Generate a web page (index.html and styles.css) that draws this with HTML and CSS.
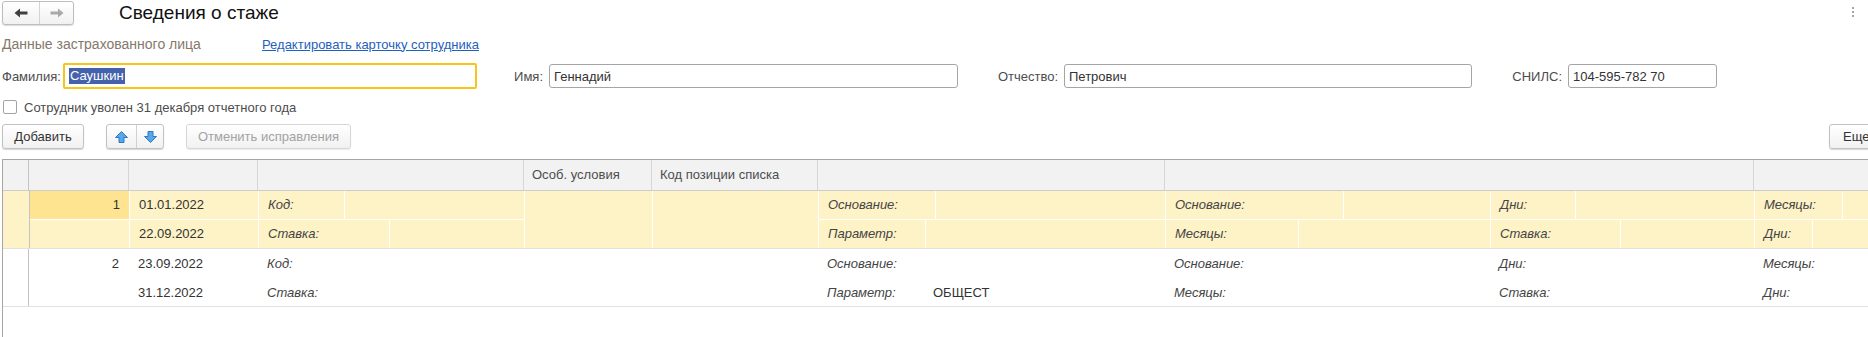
FILE: index.html
```html
<!DOCTYPE html>
<html lang="ru">
<head>
<meta charset="utf-8">
<title>Сведения о стаже</title>
<link rel="stylesheet" href="styles.css">
</head>
<body>
<div class="topbar">
  <div class="navgroup">
    <div class="navbtn nav-back">
      <svg width="14" height="10" viewBox="0 0 14 10"><path d="M0.5 5 L6 0.5 L6 3.5 L13.5 3.5 L13.5 6.5 L6 6.5 L6 9.5 Z" fill="#404040"/></svg>
    </div>
    <div class="navbtn nav-fwd">
      <svg width="14" height="10" viewBox="0 0 14 10"><path d="M13.5 5 L8 0.5 L8 3.5 L0.5 3.5 L0.5 6.5 L8 6.5 L8 9.5 Z" fill="#a9a9a9"/></svg>
    </div>
  </div>
  <h1 class="title">Сведения о стаже</h1>
  <div class="kebab"><span></span><span></span><span></span></div>
</div>

<div class="form">
  <div class="grouprow">
    <span class="grouptitle">Данные застрахованного лица</span>
    <a class="link" href="#">Редактировать карточку сотрудника</a>
  </div>

  <div class="fieldsrow">
    <span class="flabel first">Фамилия:</span>
    <div class="input focused"><span class="sel">Саушкин</span></div>
    <span class="flabel">Имя:</span>
    <div class="input">Геннадий</div>
    <span class="flabel">Отчество:</span>
    <div class="input">Петрович</div>
    <span class="flabel">СНИЛС:</span>
    <div class="input">104-595-782 70</div>
  </div>

  <div class="checkrow">
    <span class="checkbox"></span>
    <span class="checklabel">Сотрудник уволен 31 декабря отчетного года</span>
  </div>

  <div class="toolbar">
    <button class="btn btn-add">Добавить</button>
    <div class="btngroup">
      <button class="gbtn">
        <svg width="13" height="12" viewBox="0 0 13 12"><path d="M6.5 0.5 L12.5 6.5 L9 6.5 L9 11.5 L4 11.5 L4 6.5 L0.5 6.5 Z" fill="#5aa7e8" stroke="#2f78c4" stroke-width="1" stroke-linejoin="round"/></svg>
      </button>
      <button class="gbtn">
        <svg width="13" height="12" viewBox="0 0 13 12"><path d="M6.5 11.5 L12.5 5.5 L9 5.5 L9 0.5 L4 0.5 L4 5.5 L0.5 5.5 Z" fill="#5aa7e8" stroke="#2f78c4" stroke-width="1" stroke-linejoin="round"/></svg>
      </button>
    </div>
    <button class="btn btn-undo" disabled>Отменить исправления</button>
    <button class="btn btn-more">Еще <span class="caret">▾</span></button>
  </div>

  <div class="table">
    <div class="thead">
      <div class="th"></div>
      <div class="th"></div>
      <div class="th"></div>
      <div class="th"></div>
      <div class="th">Особ. условия</div>
      <div class="th">Код позиции списка</div>
      <div class="th"></div>
      <div class="th span2"></div>
      <div class="th"></div>
    </div>

    <div class="rec sel">
      <div class="c0"></div>
      <div class="cell num cur r1">1</div>
      <div class="cell r1">01.01.2022</div>
      <div class="cell split r1"><span class="lab w85">Код:</span><span class="val"></span></div>
      <div class="cell tall"></div>
      <div class="cell tall"></div>
      <div class="cell split r1"><span class="lab w116">Основание:</span><span class="val"></span></div>
      <div class="cell split r1"><span class="lab w177">Основание:</span><span class="val"></span></div>
      <div class="cell split r1"><span class="lab w84">Дни:</span><span class="val"></span></div>
      <div class="cell split r1"><span class="lab w87">Месяцы:</span><span class="val"></span></div>

      <div class="cell num"></div>
      <div class="cell">22.09.2022</div>
      <div class="cell split"><span class="lab w130">Ставка:</span><span class="val"></span></div>
      <div class="cell split"><span class="lab w106">Параметр:</span><span class="val"></span></div>
      <div class="cell split"><span class="lab w132">Месяцы:</span><span class="val"></span></div>
      <div class="cell split"><span class="lab w129">Ставка:</span><span class="val"></span></div>
      <div class="cell split"><span class="lab w57">Дни:</span><span class="val"></span></div>
    </div>

    <div class="rec">
      <div class="c0"></div>
      <div class="cell num r1">2</div>
      <div class="cell r1">23.09.2022</div>
      <div class="cell split r1"><span class="lab w85">Код:</span><span class="val"></span></div>
      <div class="cell tall"></div>
      <div class="cell tall"></div>
      <div class="cell split r1"><span class="lab w116">Основание:</span><span class="val"></span></div>
      <div class="cell split r1"><span class="lab w177">Основание:</span><span class="val"></span></div>
      <div class="cell split r1"><span class="lab w84">Дни:</span><span class="val"></span></div>
      <div class="cell split r1"><span class="lab w87">Месяцы:</span><span class="val"></span></div>

      <div class="cell num"></div>
      <div class="cell">31.12.2022</div>
      <div class="cell split"><span class="lab w130">Ставка:</span><span class="val"></span></div>
      <div class="cell split"><span class="lab w106">Параметр:</span><span class="val">ОБЩЕСТ</span></div>
      <div class="cell split"><span class="lab w132">Месяцы:</span><span class="val"></span></div>
      <div class="cell split"><span class="lab w129">Ставка:</span><span class="val"></span></div>
      <div class="cell split"><span class="lab w57">Дни:</span><span class="val"></span></div>
    </div>
  </div>
</div>
</body>
</html>
```

FILE: styles.css
```css
* { box-sizing: border-box; }
html, body {
  margin: 0;
  padding: 0;
  overflow: hidden;
  background: #fff;
}
body {
  width: 1868px;
  height: 337px;
  font-family: "Liberation Sans", Arial, sans-serif;
  font-size: 13px;
  color: #333;
}

/* ---------- top bar ---------- */
.topbar {
  display: flex;
  align-items: flex-start;
  height: 29px;
  padding: 1px 0 0 2px;
}
.navgroup {
  display: flex;
  height: 24px;
  border: 1px solid #bdbdbd;
  border-radius: 3px;
  background: linear-gradient(#ffffff, #f1f1f1);
  box-shadow: 0 1px 1px rgba(0, 0, 0, 0.14);
}
.navbtn {
  display: flex;
  align-items: center;
  justify-content: center;
}
.nav-back { width: 36px; }
.nav-fwd { width: 34px; border-left: 1px solid #d3d3d3; }
.title {
  margin: 0 0 0 45px;
  font-size: 19px;
  font-weight: normal;
  line-height: 24px;
  color: #111;
}
.kebab {
  margin: 6px 14px 0 auto;
  display: flex;
  flex-direction: column;
  gap: 2px;
}
.kebab span {
  width: 2px;
  height: 2px;
  background: #8a8a8a;
  border-radius: 1px;
}

/* ---------- form ---------- */
.form {
  width: 1900px;
  padding-left: 2px;
}
.grouprow {
  display: flex;
  align-items: center;
  height: 30px;
}
.grouptitle {
  width: 260px;
  font-size: 14px;
  color: #85796c;
}
.link {
  color: #1f5fbd;
  text-decoration: underline;
}

.fieldsrow {
  display: grid;
  grid-template-columns: 62px 412px 73px 409px 106px 408px 96px 149px;
  align-items: center;
  height: 34px;
}
.flabel {
  text-align: right;
  padding-right: 6px;
  color: #4d4d4d;
  white-space: nowrap;
}
.flabel.first { text-align: left; }
.input {
  height: 24px;
  border: 1px solid #a5a5a5;
  border-radius: 3px;
  padding-left: 4px;
  display: flex;
  align-items: center;
  color: #333;
  background: #fff;
}
.input.focused {
  border-color: #f5c618;
  box-shadow: 0 0 0 1px #f5c618;
  border-radius: 1px;
}
.sel {
  background: #4462ab;
  color: #fff;
  line-height: 16px;
  padding: 0 1px;
}

.checkrow {
  display: flex;
  align-items: center;
  height: 28px;
}
.checkbox {
  width: 14px;
  height: 14px;
  margin-left: 1px;
  border: 1px solid #a3a3a3;
  border-radius: 2px;
  background: #fff;
}
.checklabel {
  margin-left: 7px;
  color: #4d4d4d;
}

.toolbar {
  display: flex;
  align-items: flex-start;
  height: 38px;
  padding-top: 3px;
}
.btn, .gbtn {
  font-family: inherit;
  font-size: 13px;
  color: #333;
  height: 25px;
  padding: 0;
  border: 1px solid #c1c1c1;
  border-radius: 3px;
  background: linear-gradient(#ffffff, #f1f1f1);
  box-shadow: 0 1px 1px rgba(0, 0, 0, 0.16);
}
.btn-add { width: 82px; }
.btngroup {
  display: flex;
  margin-left: 22px;
  height: 25px;
  border: 1px solid #c1c1c1;
  border-radius: 3px;
  background: linear-gradient(#ffffff, #f1f1f1);
  box-shadow: 0 1px 1px rgba(0, 0, 0, 0.16);
}
.gbtn {
  height: 23px;
  border: 0;
  border-radius: 0;
  box-shadow: none;
  background: transparent;
  display: flex;
  align-items: center;
  justify-content: center;
}
.gbtn:first-child { width: 29px; }
.gbtn + .gbtn { width: 27px; border-left: 1px solid #d0d0d0; }
.btn-undo {
  width: 165px;
  margin-left: 22px;
  color: #a3a3a3;
  border-color: #d6d6d6;
  box-shadow: 0 1px 1px rgba(0, 0, 0, 0.08);
}
.btn-more {
  margin-left: auto;
  width: 60px;
  margin-right: 11px;
  text-align: left;
  padding-left: 13px;
}
.caret { font-size: 9px; color: #555; }

/* ---------- table ---------- */
.table {
  --cols: 26px 100px 129px 266px 128px 166px 347px 325px 264px 200px;
  border-left: 1px solid #a6a6a6;
  border-top: 1px solid #a6a6a6;
  height: 178px;
}
.thead {
  display: grid;
  grid-template-columns: var(--cols);
  height: 31px;
  background: #f2f2f2;
  border-bottom: 1px solid #cdcdcd;
}
.th {
  border-right: 1px solid #d6d6d6;
  padding-left: 8px;
  line-height: 30px;
  color: #4d4d4d;
  white-space: nowrap;
  overflow: hidden;
}
.th:first-child { border-right-color: #c4c4c4; }
.th.span2 { grid-column: span 2; }

.rec {
  display: grid;
  grid-template-columns: var(--cols);
  grid-template-rows: 29px 28px;
  border-bottom: 1px solid #e1e1e1;
}
.rec.sel { background: #fef2c7; }
.c0 {
  grid-row: span 2;
  border-right: 1px solid #c4c4c4;
}
.cell {
  display: flex;
  align-items: center;
  padding-left: 9px;
  border-right: 1px solid #fff;
  white-space: nowrap;
  overflow: hidden;
  color: #333;
}
.cell.r1 { border-bottom: 1px solid #fff; }
.cell.tall { grid-row: span 2; }
.cell.num {
  justify-content: flex-end;
  padding-right: 9px;
}
.cell.cur { background: #fee391; }
.cell.split { padding-left: 0; }
.lab {
  flex: none;
  height: 100%;
  display: flex;
  align-items: center;
  padding-left: 9px;
  font-style: italic;
  color: #444;
}
.val {
  flex: 1;
  height: 100%;
  display: flex;
  align-items: center;
  padding-left: 8px;
  border-left: 1px solid #fff;
  color: #333;
}
.w57 { width: 57px; }
.w84 { width: 84px; }
.w85 { width: 85px; }
.w87 { width: 87px; }
.w106 { width: 106px; }
.w116 { width: 116px; }
.w129 { width: 129px; }
.w130 { width: 130px; }
.w132 { width: 132px; }
.w177 { width: 177px; }
```
